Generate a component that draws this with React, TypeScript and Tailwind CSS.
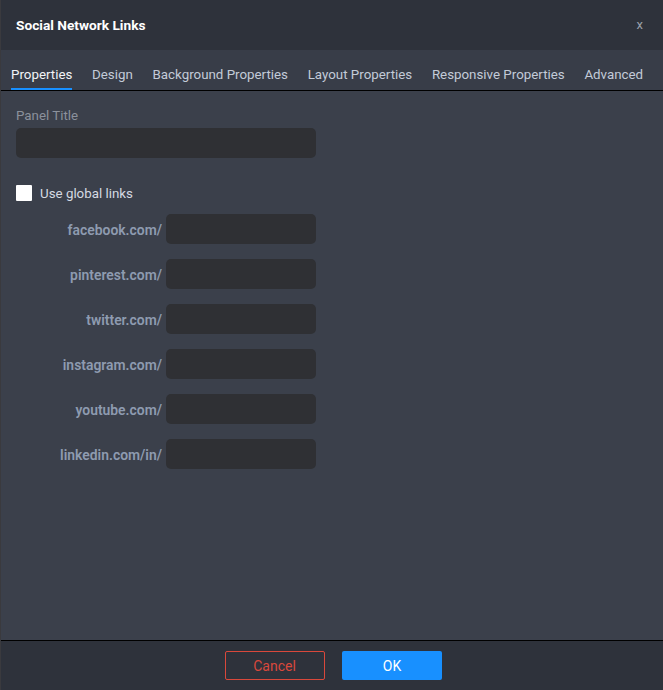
const tabs = ["Properties", "Design", "Background Properties", "Layout Properties", "Responsive Properties", "Advanced"]

const links = ["facebook.com/", "pinterest.com/", "twitter.com/", "instagram.com/", "youtube.com/", "linkedin.com/in/"]

export default function App() {
  return (
    <div className="flex h-[690px] w-[663px] flex-col overflow-hidden border-l border-[#3a3a3e] bg-[#3b404b] font-['Roboto',sans-serif] text-[13.33px]">
      <div className="flex h-[50px] shrink-0 items-center justify-between bg-[#2e323b] pl-[15px] pr-[20px]">
        <span className="text-[13.7px] font-bold text-white">Social Network Links</span>
        <span className="text-[13px] text-[#9aa0aa]">x</span>
      </div>

      <div className="flex h-[41px] shrink-0 gap-[19.7px] border-b border-black bg-[#383d48] pl-2.5">
        {tabs.map((tab, i) => (
          <div
            key={tab}
            className={
              i === 0
                ? "-mb-px flex h-[40px] items-center whitespace-nowrap border-b-2 border-[#1890ff] pt-[12px] text-[#f2f4f7]"
                : "flex h-[40px] items-center whitespace-nowrap pt-[12px] pb-[2px] text-[#c3cbd8]"
            }
          >
            {tab}
          </div>
        ))}
      </div>

      <div className="flex-1 pl-[15px] pt-[17px]">
        <div className="leading-[16px] text-[#8b919c]">Panel Title</div>
        <div className="mt-[4px] h-[30px] w-[300px] rounded-[5px] bg-[#2f3034]" />

        <div className="mt-[27px] flex h-4 items-center gap-2">
          <div className="size-4 rounded-[1px] bg-white" />
          <span className="pt-[2px] leading-4 text-[#d5dae2]">Use global links</span>
        </div>

        <div className="mt-[13px] flex flex-col gap-[15px]">
          {links.map((link) => (
            <div key={link} className="flex h-[30px] w-[300px] items-center justify-end gap-1">
              <span className="pt-[2px] text-[13.9px] font-semibold text-[#8e9bb0]">{link}</span>
              <div className="h-[30px] w-[150px] rounded-[5px] bg-[#2f3034]" />
            </div>
          ))}
        </div>
      </div>

      <div className="flex h-[50px] shrink-0 items-center justify-center gap-[17px] border-t border-black bg-[#2e323b] pb-[1px] pl-[2px] text-[14px]">
        <button className="h-[29px] w-[100px] rounded-[2px] border border-[#d9483b] pt-[2px] text-[#d9483b]">Cancel</button>
        <button className="h-[29px] w-[100px] rounded-[2px] bg-[#1890ff] pt-[2px] pl-[1px] text-white">OK</button>
      </div>
    </div>
  )
}
